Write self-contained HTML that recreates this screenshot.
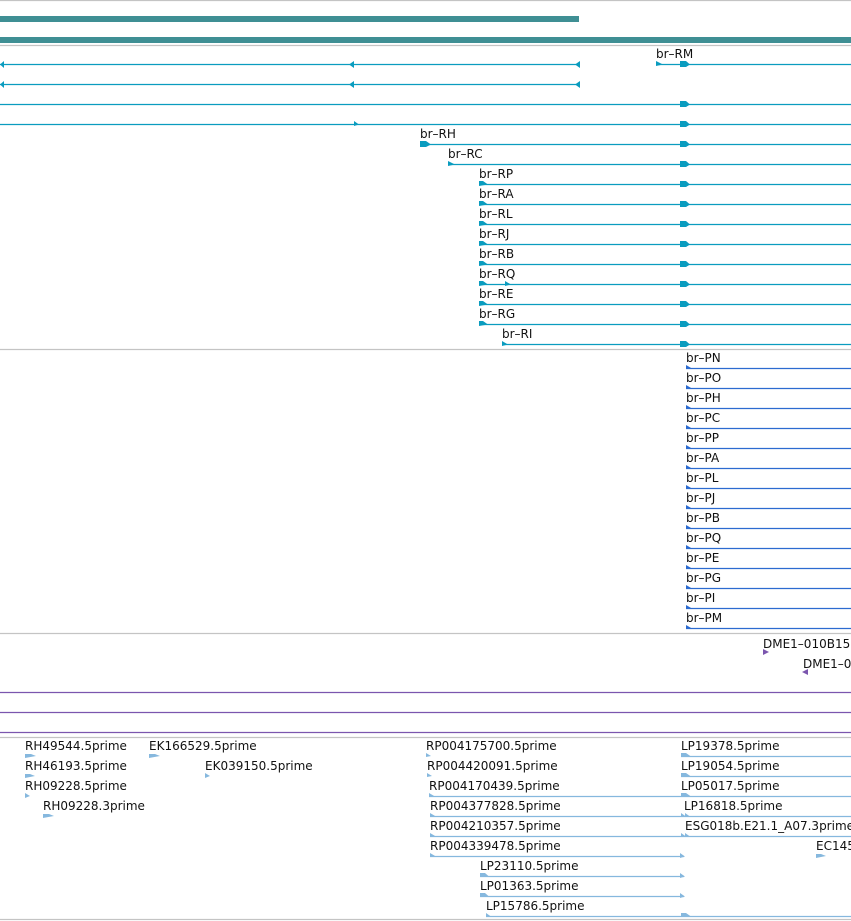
<!DOCTYPE html>
<html><head><meta charset="utf-8"><style>
html,body{margin:0;padding:0;background:#fff;}
svg{display:block;}
text{font-family:"DejaVu Sans","Liberation Sans",sans-serif;font-size:12px;fill:#111;}
.c{stroke:#0a9cbf;stroke-width:1.3;}
.b{stroke:#2c6bd0;stroke-width:1.3;}
.p{stroke:#7b56ae;stroke-width:1.3;}
.l{stroke:#86b8de;stroke-width:1.3;}
.g{stroke:#c4c4c4;stroke-width:1.3;}
.fc{fill:#0a9cbf;}.fb{fill:#2c6bd0;}.fp{fill:#7b56ae;}.fl{fill:#86b8de;}
</style></head><body>
<svg width="851" height="921" viewBox="0 0 851 921" xmlns="http://www.w3.org/2000/svg">
<line class="g" x1="0" y1="0.5" x2="851" y2="0.5"/>
<rect x="0" y="16" width="579" height="6" fill="#3f8f94"/>
<rect x="0" y="37" width="851" height="6" fill="#3f8f94"/>
<line class="g" x1="0" y1="45.5" x2="851" y2="45.5"/>

<!-- row 1 -->
<line class="c" x1="0" y1="64.5" x2="579" y2="64.5"/>
<polygon class="fc" points="0,64.5 4,61 4,68"/><polygon class="fc" points="349,64.5 354,61 354,68"/><polygon class="fc" points="575,64.5 580,61 580,68"/>
<text x="656" y="58">br–RM</text>
<line class="c" x1="656" y1="64.5" x2="851" y2="64.5"/>
<polygon class="fc" points="656,61 663,64.5 656,66"/>
<polygon class="fc" points="680,61 686,61 690,64.5 686,67 680,67"/>
<!-- row 2 -->
<line class="c" x1="0" y1="84.5" x2="579" y2="84.5"/>
<polygon class="fc" points="0,84.5 4,81 4,88"/><polygon class="fc" points="349,84.5 354,81 354,88"/><polygon class="fc" points="575,84.5 580,81 580,88"/>
<!-- row 3,4 -->
<line class="c" x1="0" y1="104.5" x2="851" y2="104.5"/>
<polygon class="fc" points="680,101 686,101 690,104.5 686,107 680,107"/>
<line class="c" x1="0" y1="124.5" x2="851" y2="124.5"/>
<polygon class="fc" points="354,121 359,124.5 354,126"/>
<polygon class="fc" points="680,121 686,121 690,124.5 686,127 680,127"/>

<text x="420" y="138">br–RH</text>
<line class="c" x1="420" y1="144.5" x2="851" y2="144.5"/>
<polygon class="fc" points="420,141 426,141 431,144.5 426,147 420,147"/>
<polygon class="fc" points="680,141 686,141 690,144.5 686,147 680,147"/>

<text x="448" y="158">br–RC</text>
<line class="c" x1="448" y1="164.5" x2="851" y2="164.5"/>
<polygon class="fc" points="448,161 455,164.5 448,166"/>
<polygon class="fc" points="680,161 686,161 690,164.5 686,167 680,167"/>

<text x="479" y="178">br–RP</text>
<line class="c" x1="479" y1="184.5" x2="851" y2="184.5"/>
<polygon class="fc" points="479,181 483,181 488,184.5 479,186"/>
<polygon class="fc" points="680,181 686,181 690,184.5 686,187 680,187"/>

<text x="479" y="198">br–RA</text>
<line class="c" x1="479" y1="204.5" x2="851" y2="204.5"/>
<polygon class="fc" points="479,201 483,201 488,204.5 479,206"/>
<polygon class="fc" points="680,201 686,201 690,204.5 686,207 680,207"/>

<text x="479" y="218">br–RL</text>
<line class="c" x1="479" y1="224.5" x2="851" y2="224.5"/>
<polygon class="fc" points="479,221 483,221 488,224.5 479,226"/>
<polygon class="fc" points="680,221 686,221 690,224.5 686,227 680,227"/>

<text x="479" y="238">br–RJ</text>
<line class="c" x1="479" y1="244.5" x2="851" y2="244.5"/>
<polygon class="fc" points="479,241 483,241 488,244.5 479,246"/>
<polygon class="fc" points="680,241 686,241 690,244.5 686,247 680,247"/>

<text x="479" y="258">br–RB</text>
<line class="c" x1="479" y1="264.5" x2="851" y2="264.5"/>
<polygon class="fc" points="479,261 483,261 488,264.5 479,266"/>
<polygon class="fc" points="680,261 686,261 690,264.5 686,267 680,267"/>

<text x="479" y="278">br–RQ</text>
<line class="c" x1="479" y1="284.5" x2="851" y2="284.5"/>
<polygon class="fc" points="479,281 483,281 488,284.5 479,286"/>
<polygon class="fc" points="505,281 511,284.5 505,286"/>
<polygon class="fc" points="680,281 686,281 690,284.5 686,287 680,287"/>

<text x="479" y="298">br–RE</text>
<line class="c" x1="479" y1="304.5" x2="851" y2="304.5"/>
<polygon class="fc" points="479,301 483,301 488,304.5 479,306"/>
<polygon class="fc" points="680,301 686,301 690,304.5 686,307 680,307"/>

<text x="479" y="318">br–RG</text>
<line class="c" x1="479" y1="324.5" x2="851" y2="324.5"/>
<polygon class="fc" points="479,321 483,321 488,324.5 479,326"/>
<polygon class="fc" points="680,321 686,321 690,324.5 686,327 680,327"/>

<text x="502" y="338">br–RI</text>
<line class="c" x1="502" y1="344.5" x2="851" y2="344.5"/>
<polygon class="fc" points="502,341 508,344.5 502,346"/>
<polygon class="fc" points="680,341 686,341 690,344.5 686,347 680,347"/>

<line class="g" x1="0" y1="349.5" x2="851" y2="349.5"/>

<!-- blue -->
<g>
<text x="686" y="362">br–PN</text><line class="b" x1="686" y1="368.5" x2="851" y2="368.5"/><polygon class="fb" points="686,365 692,368.5 686,369"/>
<text x="686" y="382">br–PO</text><line class="b" x1="686" y1="388.5" x2="851" y2="388.5"/><polygon class="fb" points="686,385 692,388.5 686,389"/>
<text x="686" y="402">br–PH</text><line class="b" x1="686" y1="408.5" x2="851" y2="408.5"/><polygon class="fb" points="686,405 692,408.5 686,409"/>
<text x="686" y="422">br–PC</text><line class="b" x1="686" y1="428.5" x2="851" y2="428.5"/><polygon class="fb" points="686,425 692,428.5 686,429"/>
<text x="686" y="442">br–PP</text><line class="b" x1="686" y1="448.5" x2="851" y2="448.5"/><polygon class="fb" points="686,445 692,448.5 686,449"/>
<text x="686" y="462">br–PA</text><line class="b" x1="686" y1="468.5" x2="851" y2="468.5"/><polygon class="fb" points="686,465 692,468.5 686,469"/>
<text x="686" y="482">br–PL</text><line class="b" x1="686" y1="488.5" x2="851" y2="488.5"/><polygon class="fb" points="686,485 692,488.5 686,489"/>
<text x="686" y="502">br–PJ</text><line class="b" x1="686" y1="508.5" x2="851" y2="508.5"/><polygon class="fb" points="686,505 692,508.5 686,509"/>
<text x="686" y="522">br–PB</text><line class="b" x1="686" y1="528.5" x2="851" y2="528.5"/><polygon class="fb" points="686,525 692,528.5 686,529"/>
<text x="686" y="542">br–PQ</text><line class="b" x1="686" y1="548.5" x2="851" y2="548.5"/><polygon class="fb" points="686,545 692,548.5 686,549"/>
<text x="686" y="562">br–PE</text><line class="b" x1="686" y1="568.5" x2="851" y2="568.5"/><polygon class="fb" points="686,565 692,568.5 686,569"/>
<text x="686" y="582">br–PG</text><line class="b" x1="686" y1="588.5" x2="851" y2="588.5"/><polygon class="fb" points="686,585 692,588.5 686,589"/>
<text x="686" y="602">br–PI</text><line class="b" x1="686" y1="608.5" x2="851" y2="608.5"/><polygon class="fb" points="686,605 692,608.5 686,609"/>
<text x="686" y="622">br–PM</text><line class="b" x1="686" y1="628.5" x2="851" y2="628.5"/><polygon class="fb" points="686,625 692,628.5 686,629"/>
</g>
<line class="g" x1="0" y1="633.5" x2="851" y2="633.5"/>

<text x="763" y="648">DME1–010B15</text>
<polygon class="fp" points="763,649 769,652 763,655"/>
<text x="803" y="668">DME1–0</text>
<polygon class="fp" points="808,669 802,672 808,675"/>
<line class="p" x1="0" y1="692.5" x2="851" y2="692.5"/>
<line class="p" x1="0" y1="712.5" x2="851" y2="712.5"/>
<line class="p" x1="0" y1="732.5" x2="851" y2="732.5"/>
<line class="g" x1="0" y1="737.5" x2="851" y2="737.5"/>

<!-- ESTs -->
<text x="25" y="750">RH49544.5prime</text><polygon class="fl" points="25,754 31,754 36,756 25,758"/>
<text x="149" y="750">EK166529.5prime</text><polygon class="fl" points="149,754 155,754 160,756 149,758"/>
<text x="426" y="750">RP004175700.5prime</text><polygon class="fl" points="426,753 431,756 426,757"/>
<text x="681" y="750">LP19378.5prime</text><line class="l" x1="681" y1="756.5" x2="851" y2="756.5"/><polygon class="fl" points="681,753 686,753 691,756.5 681,757"/>

<text x="25" y="770">RH46193.5prime</text><polygon class="fl" points="25,774 30,774 35,776 25,778"/>
<text x="205" y="770">EK039150.5prime</text><polygon class="fl" points="205,773 210,776 205,778"/>
<text x="427" y="770">RP004420091.5prime</text><polygon class="fl" points="427,773 432,776 427,777"/>
<text x="681" y="770">LP19054.5prime</text><line class="l" x1="681" y1="776.5" x2="851" y2="776.5"/><polygon class="fl" points="681,773 686,773 691,776.5 681,777"/>

<text x="25" y="790">RH09228.5prime</text><polygon class="fl" points="25,793 30,796 25,798"/>
<text x="429" y="790">RP004170439.5prime</text><line class="l" x1="429" y1="796.5" x2="851" y2="796.5"/><polygon class="fl" points="429,793 435,796.5 429,797"/><polygon class="fl" points="681,793 686,793 691,796.5 681,797"/>
<text x="681" y="790">LP05017.5prime</text>

<text x="43" y="810">RH09228.3prime</text><polygon class="fl" points="43,814 49,814 54,816 43,818"/>
<text x="430" y="810">RP004377828.5prime</text><line class="l" x1="430" y1="816.5" x2="851" y2="816.5"/><polygon class="fl" points="430,813 436,816.5 430,817"/><polygon class="fl" points="681,813 686,816.5 681,817"/><polygon class="fl" points="685,813 690,816.5 685,817"/>
<text x="684" y="810">LP16818.5prime</text>

<text x="430" y="830">RP004210357.5prime</text><line class="l" x1="430" y1="836.5" x2="851" y2="836.5"/><polygon class="fl" points="430,833 436,836.5 430,837"/><polygon class="fl" points="681,833 686,836.5 681,837"/><polygon class="fl" points="685,833 690,836.5 685,837"/>
<text x="685" y="830">ESG018b.E21.1_A07.3prime</text>

<text x="430" y="850">RP004339478.5prime</text><line class="l" x1="430" y1="856.5" x2="684" y2="856.5"/><polygon class="fl" points="430,853 436,856.5 430,857"/><polygon class="fl" points="680,853 685,856.5 680,858"/>
<text x="816" y="850">EC145</text><polygon class="fl" points="816,854 821,854 826,856 816,858"/>

<text x="480" y="870">LP23110.5prime</text><line class="l" x1="480" y1="876.5" x2="684" y2="876.5"/><polygon class="fl" points="480,873 485,873 489,876.5 480,877"/><polygon class="fl" points="680,873 685,876.5 680,878"/>
<text x="480" y="890">LP01363.5prime</text><line class="l" x1="480" y1="896.5" x2="684" y2="896.5"/><polygon class="fl" points="480,893 485,893 489,896.5 480,897"/><polygon class="fl" points="680,893 685,896.5 680,898"/>
<text x="486" y="910">LP15786.5prime</text><line class="l" x1="486" y1="916.5" x2="851" y2="916.5"/><polygon class="fl" points="486,913 491,916.5 486,917"/><polygon class="fl" points="681,913 686,913 691,916.5 681,917"/>

<line class="g" x1="0" y1="919.5" x2="851" y2="919.5"/>
</svg>
</body></html>
